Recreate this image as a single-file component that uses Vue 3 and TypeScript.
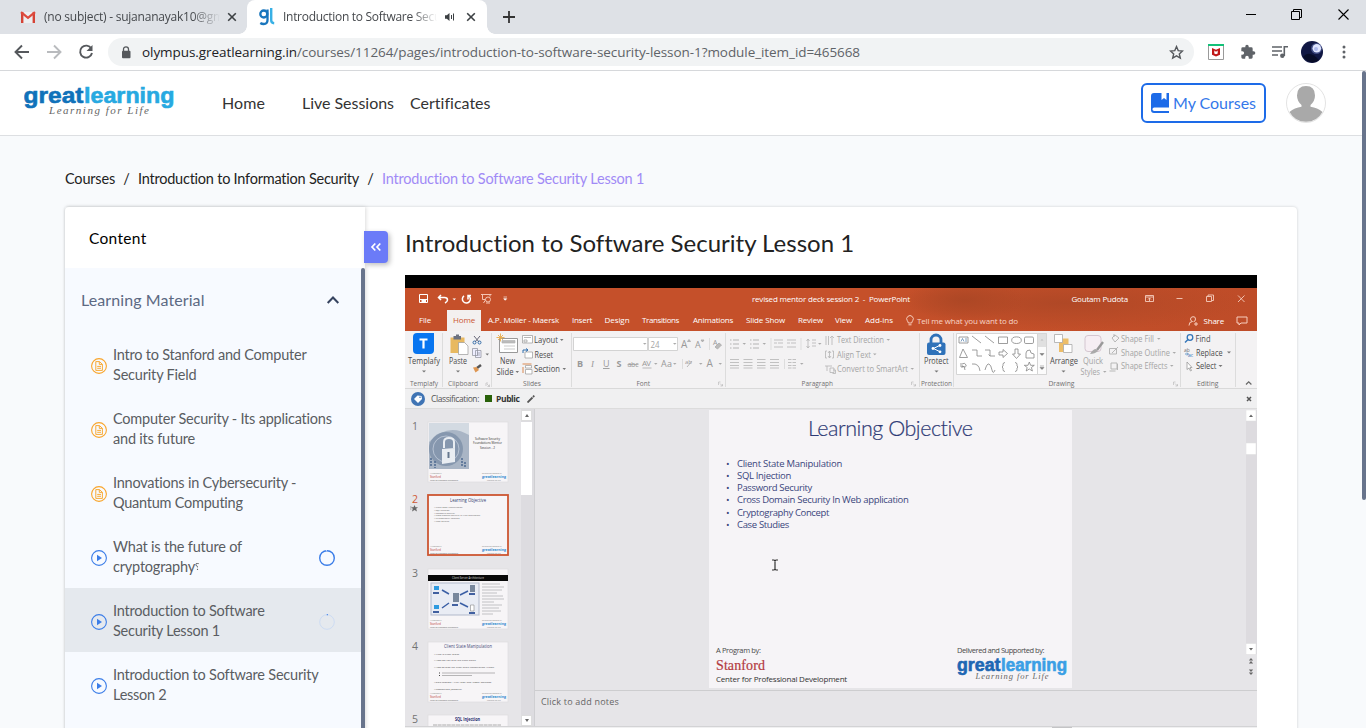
<script setup lang="ts">
interface Label { t: string; x: number; y: number; w: number; c?: string; s?: number }
interface Lesson { lines: { t: string; w: number }[]; kind: 'doc' | 'video'; ring?: 'full' | 'empty'; active?: boolean; mark?: boolean }

// Spreads letters so a label takes up the given width.
const vFit = {
  mounted(el: HTMLElement, binding: { value: number }) {
    const count = (el.textContent ?? '').length
    const natural = el.getBoundingClientRect().width
    if (count) el.style.letterSpacing = `${(binding.value - natural) / count}px`
  },
}

const lessons: Lesson[] = [
  { kind: 'doc', lines: [{ t: 'Intro to Stanford and Computer', w: 193.5 }, { t: 'Security Field', w: 83.5 }] },
  { kind: 'doc', lines: [{ t: 'Computer Security - Its applications', w: 219 }, { t: 'and its future', w: 82 }] },
  { kind: 'doc', lines: [{ t: 'Innovations in Cybersecurity -', w: 183.5 }, { t: 'Quantum Computing', w: 130 }] },
  { kind: 'video', ring: 'full', mark: true, lines: [{ t: 'What is the future of', w: 129 }, { t: 'cryptography', w: 82 }] },
  { kind: 'video', ring: 'empty', active: true, lines: [{ t: 'Introduction to Software', w: 151.5 }, { t: 'Security Lesson 1', w: 107 }] },
  { kind: 'video', lines: [{ t: 'Introduction to Software Security', w: 205.5 }, { t: 'Lesson 2', w: 53.5 }] },
]

const ribbonTabs = [
  { t: 'File', cell: 42, pad: 14, w: 12 },
  { t: 'Home', cell: 34, pad: 6, w: 22, on: true },
  { t: 'A.P. Moller - Maersk', cell: 84, pad: 7, w: 71 },
  { t: 'Insert', cell: 33, pad: 7, w: 20 },
  { t: 'Design', cell: 38, pad: 6.5, w: 25 },
  { t: 'Transitions', cell: 51, pad: 6, w: 37 },
  { t: 'Animations', cell: 53, pad: 6, w: 40 },
  { t: 'Slide Show', cell: 52, pad: 6, w: 39 },
  { t: 'Review', cell: 38, pad: 6, w: 25 },
  { t: 'View', cell: 29, pad: 5, w: 17 },
  { t: 'Add-ins', cell: 42, pad: 6, w: 28 },
]

const g: Record<string, Label[]> = {
  templafy: [
    { t: 'Templafy', x: 408, y: 364, w: 32, c: 'on', s: 8.5 },
    { t: 'Templafy', x: 410, y: 386, w: 28, s: 7.6 },
  ],
  clipboard: [
    { t: 'Paste', x: 449, y: 364, w: 18, c: 'on', s: 8.5 },
    { t: 'Clipboard', x: 448, y: 386, w: 30, s: 7.6 },
  ],
  slides: [
    { t: 'New', x: 500, y: 364, w: 15, c: 'on', s: 8.5 },
    { t: 'Slide', x: 496.5, y: 374.5, w: 17, c: 'on', s: 8.5 },
    { t: 'Layout', x: 534, y: 343, w: 24, c: 'on', s: 8.5 },
    { t: 'Reset', x: 534.5, y: 357.5, w: 18.5, c: 'on', s: 8.5 },
    { t: 'Section', x: 534, y: 372, w: 26, c: 'on', s: 8.5 },
    { t: 'Slides', x: 523, y: 386, w: 18, s: 7.6 },
  ],
  font: [
    { t: '24', x: 650.5, y: 347.5, w: 9, c: 'off', s: 8.5 },
    { t: 'Font', x: 636.5, y: 386, w: 13.5, s: 7.6 },
  ],
  para: [
    { t: 'Text Direction', x: 837, y: 343, w: 47, c: 'off', s: 8.5 },
    { t: 'Align Text', x: 837, y: 357.5, w: 34, c: 'off', s: 8.5 },
    { t: 'Convert to SmartArt', x: 837, y: 372, w: 71, c: 'off', s: 8.5 },
    { t: 'Paragraph', x: 801.5, y: 386, w: 31.5, s: 7.6 },
  ],
  protect: [
    { t: 'Protect', x: 924, y: 364, w: 24.5, c: 'on', s: 8.5 },
    { t: 'Protection', x: 921, y: 386, w: 31, s: 7.6 },
  ],
  drawing: [
    { t: 'Arrange', x: 1050, y: 364, w: 28, c: 'on', s: 8.5 },
    { t: 'Quick', x: 1083, y: 364, w: 20, c: 'off', s: 8.5 },
    { t: 'Styles', x: 1080.5, y: 374.5, w: 19.5, c: 'off', s: 8.5 },
    { t: 'Shape Fill', x: 1121, y: 341.5, w: 33, c: 'off', s: 8.5 },
    { t: 'Shape Outline', x: 1121, y: 355.5, w: 49, c: 'off', s: 8.5 },
    { t: 'Shape Effects', x: 1121, y: 369, w: 46.5, c: 'off', s: 8.5 },
    { t: 'Drawing', x: 1048.5, y: 386, w: 26, s: 7.6 },
  ],
  editing: [
    { t: 'Find', x: 1195.5, y: 341.5, w: 15, c: 'on', s: 8.5 },
    { t: 'Replace', x: 1196, y: 355.5, w: 26.5, c: 'on', s: 8.5 },
    { t: 'Select', x: 1196, y: 369, w: 20.5, c: 'on', s: 8.5 },
    { t: 'Editing', x: 1197, y: 386, w: 21.5, s: 7.6 },
  ],
}

const bullets = [
  { t: 'Client State Manipulation', w: 105 },
  { t: 'SQL Injection', w: 54 },
  { t: 'Password Security', w: 75 },
  { t: 'Cross Domain Security In Web application', w: 171.5 },
  { t: 'Cryptography Concept', w: 92 },
  { t: 'Case Studies', w: 52 },
]

const miniBullets = ['Client State Manipulation', 'SQL Injection', 'Password Security', 'Cross Domain Security In Web application', 'Cryptography Concept', 'Case Studies']
const miniNotes = ['What is Client State?', 'How can you alter the Client state?', 'How do Stop the Client State Manipulation Attack?']
const thumbs = [1, 2, 3, 4, 5]
</script>

<template>
  <div class="window">
    <div class="tabstrip">
      <div class="tab idle">
        <svg class="fav" width="16" height="16" viewBox="0 0 16 16"><path d="M1 3h14v11H1z" fill="#eceff1" /><path d="M1 3h2.4v11H1zM12.6 3H15v11h-2.400z" fill="#d54336" /><path d="M1 3.200l7 5.600 7-5.600" fill="none" stroke="#dd4b3e" stroke-width="2.300" /></svg>
        <span class="tabtext t1"><span v-fit="180">(no subject) - sujananayak10@gm</span></span>
        <svg class="x" width="10" height="10" viewBox="0 0 10 10"><path d="M1.200 1.200l7.600 7.600M8.800 1.200l-7.600 7.600" /></svg>
      </div>
      <div class="tab active">
        <svg class="fav" width="16" height="18" viewBox="0 0 16 18"><circle cx="4.800" cy="6" r="3.500" fill="none" stroke="#1976bd" stroke-width="2.300" /><path d="M8.500 1.500v10.500q0 4-3.800 4-2 0-3.400-1" fill="none" stroke="#1976bd" stroke-width="2.300" /><path d="M11 1.200h1.200v11q0 2.800 3 3" fill="none" stroke="#38b0e5" stroke-width="2.400" /></svg>
        <span class="tabtext t2"><span v-fit="158">Introduction to Software Secu</span></span>
        <svg class="sound" width="12" height="12" viewBox="0 0 12 12"><path d="M1 4.300h1.800L5.500 2v8L2.800 7.700H1z" fill="#3c4043" /><path d="M7.500 4v4M9.500 2.500v7" stroke="#3c4043" /></svg>
        <svg class="x" width="10" height="10" viewBox="0 0 10 10"><path d="M1.200 1.200l7.600 7.600M8.800 1.200l-7.600 7.600" /></svg>
      </div>
      <svg class="plus" width="12" height="12" viewBox="0 0 12 12"><path d="M6 0v12M0 6h12" stroke="#333" stroke-width="1.800" /></svg>
      <div class="winctl">
        <svg width="10" height="11" viewBox="0 0 10 11"><path d="M0 5.500h10" stroke="#000" /></svg>
        <svg width="11" height="11" viewBox="0 0 11 11"><path d="M.5 2.500h8v8h-8zM2.500 2.500v-2h8v8h-2" fill="none" stroke="#000" /></svg>
        <svg width="11" height="11" viewBox="0 0 11 11"><path d="M.5.5l10 10M10.500.5l-10 10" stroke="#000" stroke-width="1.100" /></svg>
      </div>
    </div>

    <div class="toolbar">
      <svg class="back" width="16" height="16" viewBox="0 0 16 16"><path d="M15 8H2M8 1.500L1.500 8 8 14.500" /></svg>
      <svg class="fwd" width="16" height="16" viewBox="0 0 16 16"><path d="M1 8h13M8 1.500L14.500 8 8 14.500" /></svg>
      <svg class="reload" width="16" height="16" viewBox="0 0 16 16"><path d="M13.300 4.500A6 6 0 1 0 14 9" /><path d="M14.500 1v6h-6z" fill="#55585c" stroke="none" /></svg>
      <div class="omnibox">
        <svg width="10" height="13" viewBox="0 0 10 13"><path d="M2.500 5V3.300a2.500 2.500 0 0 1 5 0V5" fill="none" stroke="#55585c" stroke-width="1.300" /><rect x="1" y="4.800" width="8.500" height="7.400" rx="1" fill="#55585c" /></svg>
        <div class="url" v-fit="718"><b>olympus.greatlearning.in</b>/courses/11264/pages/introduction-to-software-security-lesson-1?module_item_id=465668</div>
        <svg class="star" width="15" height="15" viewBox="0 0 15 15"><path d="M7.500 1.600l1.700 4 4.300.4-3.200 2.900 1 4.200-3.800-2.300-3.800 2.300 1-4.200L1.500 6l4.300-.4z" fill="none" stroke="#55585c" stroke-width="1.400" /></svg>
      </div>
      <div class="exts">
        <svg width="16" height="16" viewBox="0 0 16 16"><path d="M.5.5h15v15H.5z" fill="#fff" stroke="#9a9a9a" /><path d="M0 0h16v2H0z" fill="#12c178" /><path d="M4 4l4 1.800L12 4v6.700L8 12.500l-4-1.800z" fill="#c01818" /><path d="M6.300 6.500v3l1.700.8 1.700-.8v-3L8 7.800z" fill="#fff" /></svg>
        <svg width="16" height="16" viewBox="0 0 24 24"><path d="M20.500 11H19V7a2 2 0 0 0-2-2h-4V3.500a2.500 2.500 0 0 0-5 0V5H4a2 2 0 0 0-2 2v3.800h1.500a2.700 2.700 0 0 1 0 5.400H2V20a2 2 0 0 0 2 2h3.800v-1.500a2.700 2.700 0 0 1 5.400 0V22H17a2 2 0 0 0 2-2v-4h1.500a2.500 2.500 0 0 0 0-5z" fill="#5f6368" /></svg>
        <svg width="16" height="14" viewBox="0 0 16 14"><path d="M0 2h10M0 6h10M0 10h6" stroke="#5f6368" stroke-width="1.600" /><circle cx="10.300" cy="10.800" r="2.200" fill="#5f6368" /><path d="M12.300 11V1.800H16" fill="none" stroke="#5f6368" stroke-width="1.600" /></svg>
        <svg width="22" height="22" viewBox="0 0 22 22"><circle cx="11" cy="11" r="11" fill="#101743" /><path d="M2 16Q8 8 18 19Q10 25 2 16" fill="#070c27" /><circle cx="15.500" cy="7.500" r="5.500" fill="#6170b0" opacity=".6" /><circle cx="15.800" cy="7.300" r="4.300" fill="#dfe5ff" /><circle cx="15" cy="8" r="2" fill="#aeb9ec" /></svg>
        <svg width="4" height="14" viewBox="0 0 4 14"><circle v-for="y in [2, 7, 12]" :key="y" cx="2" :cy="y" r="1.500" fill="#5f6368" /></svg>
      </div>
    </div>

    <div class="page">
      <header class="site">
        <svg class="logo" width="152" height="40" viewBox="24 80 152 40">
          <g class="brand"><text x="23.500" y="103" textLength="60" lengthAdjust="spacingAndGlyphs" fill="#1072ba">great</text><text x="84" y="103" textLength="90.500" lengthAdjust="spacingAndGlyphs" fill="#27a9e1">learning</text></g>
          <text x="49" y="114" textLength="100" class="tag">Learning for Life</text>
        </svg>
        <nav>
          <a class="n1"><span v-fit="43">Home</span></a>
          <a class="n2"><span v-fit="92">Live Sessions</span></a>
          <a><span v-fit="80.500">Certificates</span></a>
        </nav>
        <button class="mycourses">
          <svg width="18" height="20" viewBox="0 0 18 20"><path d="M3 0h7.500v7l2.500-2 2.500 2V0H18v14.500H3.200a1 1 0 0 0 0 3.500H18v2H3q-3 0-3-3V3q0-3 3-3z" fill="#1d6be8" /></svg>
          <span v-fit="83">My Courses</span>
        </button>
        <svg class="avatar" width="40" height="40" viewBox="0 0 40 40"><circle cx="20" cy="20" r="19.500" fill="#fff" stroke="#e3e3e3" /><path d="M3.500 29q5-4.500 12-5.300V22q-4.500-4-4.500-9.500Q11 3 20 3t9 9.500q0 5.500-4.500 9.500v1.700q7 .8 12 5.300Q31 38.800 20 38.800T3.500 29z" fill="#a9a9a9" /></svg>
      </header>

      <div class="crumbs">
        <span v-fit="50">Courses</span><i>/</i><span v-fit="221.500">Introduction to Information Security</span><i>/</i><span class="here" v-fit="262">Introduction to Software Security Lesson 1</span>
      </div>

      <div class="card">
        <aside>
          <div class="ctitle"><span v-fit="57.500">Content</span></div>
          <div class="scroller">
            <div class="list">
              <div class="section">
                <span v-fit="123.500">Learning Material</span>
                <svg width="14" height="10" viewBox="0 0 14 10"><path d="M1.700 8L7 2.500 12.300 8" fill="none" stroke="#36435f" stroke-width="2" /></svg>
              </div>
              <div v-for="(l, i) in lessons" :key="i" class="lesson" :class="{ current: l.active }">
                <svg v-if="l.kind === 'doc'" width="16" height="16" viewBox="0 0 16 16"><g fill="none" stroke="#f9a52c"><circle cx="8" cy="8" r="7.400" stroke-width="1.100" /><path d="M4.800 3.600h3.700l2.900 2.700v6.100H4.800zM8.300 3.700v2.700h3M6.200 8.400h3.800M6.200 10.300h3.800" stroke-width=".95" /></g></svg>
                <svg v-else width="16" height="16" viewBox="0 0 16 16"><circle cx="8" cy="8" r="7.400" fill="none" stroke="#3b7de8" stroke-width="1.100" /><path d="M6 4.800v6.400L11 8z" fill="#3b7de8" /></svg>
                <div class="ltext">
                  <div v-for="(line, j) in l.lines" :key="j"><span v-fit="line.w">{{ line.t }}</span><span v-if="l.mark && j === 1" class="qm">?</span></div>
                </div>
                <svg v-if="l.ring" width="16" height="16" viewBox="0 0 16 16"><circle cx="8" cy="8" r="7.300" fill="none" :stroke="l.ring === 'full' ? '#3b7de8' : '#cddcf3'" :stroke-width="l.ring === 'full' ? 1.4 : 1" /><path v-if="l.ring === 'full'" d="M7.500 0v1.300" stroke="#dbe7fb" stroke-width=".8" /><path v-else d="M8.300 0v1.300" stroke="#3b7de8" /></svg>
              </div>
            </div>
            <div class="sbar"></div>
          </div>
          <div class="collapse"><svg width="12" height="10" viewBox="0 0 12 10"><path d="M5.300 1.500L2 5l3.300 3.500M10.300 1.500L7 5l3.300 3.500" fill="none" stroke="#fff" stroke-width="1.700" /></svg></div>
        </aside>

        <main>
          <h1><span v-fit="449">Introduction to Software Security Lesson 1</span></h1>
          <div class="video">
            <div class="letterbox"></div>
            <div class="ppthead">
              <div class="ptitle">
                <svg width="110" height="21" viewBox="405 288 110 21" fill="none" stroke="#fff">
                  <path d="M419.500 294.500h8v8h-8zM419.500 299.500h8" /><path d="M421.500 300h4.500v2.500h-4.500z" fill="#fff" stroke="none" /><path d="M441 295l-2.500 2.500 2.500 2.500M439 297.500h5.500q3 0 3 2.500 0 1.500-2.500 3" stroke-width="1.500" /><path d="M452.500 298.500h3.500l-1.700 1.800z" fill="#fff" stroke="none" /><path d="M464 295.800a4 4 0 1 0 5 .2M468 299.500v-4h3" stroke-width="1.500" /><path d="M481 294.500h10.500M482.500 295v4.500h3M490 295v1.500M483.500 303l2-3" stroke="#f4c4b2" /><circle cx="488" cy="299.500" r="2.500" stroke="#f4c4b2" /><path d="M487 302v2M489 302v2" stroke="#f4c4b2" /><path d="M503.500 297h3.500M503.700 298.700h3l-1.500 1.600z" stroke-width=".6" fill="#fff" />
                </svg>
                <span class="doc" v-fit="158">revised mentor deck session 2 &nbsp;- &nbsp;PowerPoint</span>
                <span class="owner" v-fit="56.500">Goutam Pudota</span>
                <svg width="120" height="21" viewBox="1137 288 120 21" fill="none" stroke="#f5cdbd"><path d="M1145.500 295.500h8v6h-8zM1145.500 297h8M1149.500 301v-3M1148 299.500l1.500-1.500 1.500 1.500M1176.500 298.500h6M1206.500 296.500h5v5h-5zM1208 296.500v-1.500h5.500v5.500h-1.500M1238 295.500l6.500 6.500M1244.500 295.500l-6.500 6.500" stroke-width=".9" /></svg>
              </div>
              <div class="ptabs">
                <div v-for="t in ribbonTabs" :key="t.t" :class="{ on: t.on }" :style="{ width: t.cell + 'px', paddingLeft: t.pad + 'px' }"><span v-fit="t.w">{{ t.t }}</span></div>
                <svg class="bulb" width="10" height="12" viewBox="0 0 10 12"><path d="M3.300 8q0-1-1-2.200a3.300 3.300 0 1 1 5.400 0Q6.700 7 6.700 8zM3.500 9.800h3" fill="none" stroke="#f7cdbd" /></svg>
                <span class="tell" v-fit="101">Tell me what you want to do</span>
                <svg class="person" width="10" height="10" viewBox="0 0 10 10"><path d="M1 9.500q0-4 3.500-4Q2.500 5 2.500 3T5 .7 7.500 3 5.500 5.700M6 8h4M8 6v4" fill="none" stroke="#f7cdbd" /></svg>
                <span class="share" v-fit="20.500">Share</span>
                <svg width="12" height="10" viewBox="0 0 12 10"><path d="M1 1h10v6H5L3 9V7H1z" fill="none" stroke="#f7cdbd" /></svg>
              </div>
            </div>

            <div class="ribbon">
              <svg width="38" height="57" viewBox="405 332 38 57">
                <path d="M417 333h17v17q0 4-4 4h-13q-4 0-4-4v-13q0-4 4-4z" fill="#0875f0" /><path d="M419.500 339.500h8M423.500 339.500v9" stroke="#fff" stroke-width="2.200" /><path d="M422 370.500h4l-2 2z" class="arr" />
                <text v-for="l in g.templafy" :key="l.t + l.y" :x="l.x" :y="l.y" :textLength="l.w" lengthAdjust="spacingAndGlyphs" :font-size="l.s" :class="l.c">{{ l.t }}</text>
                <path d="M442.500 333v54" class="sep" />
              </svg>
              <svg width="49" height="57" viewBox="443 332 49 57">
                <path d="M450.500 337.500h14v15.500h-14z" fill="#e8b961" /><path d="M453.500 336h7.500v3.500h-7.500zM456 334.500h3v2h-3z" fill="#6c7280" /><path d="M458.500 342.500h6l3.500 3.500v8.500h-9.500z" fill="#fff" stroke="#999" stroke-width=".7" />
                <path d="M474 336l5 6M480 336l-5 6" stroke="#667" /><circle cx="474.500" cy="342.500" r="1.500" fill="none" stroke="#356ca8" /><circle cx="479.500" cy="342.500" r="1.500" fill="none" stroke="#356ca8" />
                <path d="M472.500 348.500h5v7h-5zM475.500 350.500h5.500v7h-5.500zM477 353h3M477 355h3" fill="#eef" stroke="#8b8e99" stroke-width=".7" /><path d="M485.500 353.500h3.500l-1.700 2zM456 370.500h4l-2 2z" class="arr" />
                <path d="M481 365l-4 3" stroke="#555" stroke-width="2.400" /><path d="M473 367.500l3.500-.5 2.500 3-3.500 2.500z" fill="#de9651" />
                <text v-for="l in g.clipboard" :key="l.t" :x="l.x" :y="l.y" :textLength="l.w" lengthAdjust="spacingAndGlyphs" :font-size="l.s" :class="l.c">{{ l.t }}</text>
                <path d="M486 386v-3h2M487 384l2.500 2.500M489.500 384.500v2h-2" class="launch" /><path d="M491.500 333v54" class="sep" />
              </svg>
              <svg width="80" height="57" viewBox="492 332 80 57">
                <path d="M499.500 338.500h18v14h-18z" fill="#fff" stroke="#999" /><path d="M502 340.500h13v2.500h-13zM504 346h11M504 349h11" fill="#bbb" stroke="#b5b5b5" stroke-width=".7" /><path d="M500.500 333.500v8M496.500 337.500h8M498 335l5 5M503 335l-5 5" stroke="#e8ad4c" stroke-width=".9" />
                <g fill="#fff" stroke="#999" stroke-width=".7"><path d="M522.500 335.500h10v7.500h-10zM524 337.500h7M524 340h3v2h-3z" /><path d="M525 352h7.500v6h-7.500z" /><path d="M525.500 365.500h6v2.500h-6zM525.500 369.500h6.500v4.500h-6.500z" /></g><path d="M523 353v-3h5M526 348.500l2 1.500-2 1.500" fill="none" stroke="#306eac" /><path d="M522.500 364h9M523 367v6" stroke="#db8a52" />
                <text v-for="l in g.slides" :key="l.t" :x="l.x" :y="l.y" :textLength="l.w" lengthAdjust="spacingAndGlyphs" :font-size="l.s" :class="l.c">{{ l.t }}</text>
                <path d="M560 339h3.500l-1.700 2zM562.500 368h3.500l-1.700 2zM515.500 371h3.500l-1.700 2z" class="arr" /><path d="M571.500 333v54" class="sep" />
              </svg>
              <svg width="154" height="57" viewBox="572 332 154 57">
                <path d="M573.500 337.500h74v13h-74zM648.500 337.500h29v13h-29z" fill="#fff" stroke="#d3d3d3" /><path d="M643 343h3.500l-1.700 1.700zM673 343h3.500l-1.700 1.700zM654 363h3.500l-1.700 1.700zM673 363h3.500l-1.700 1.700zM699 363h3.500l-1.700 1.700zM718.500 363h3.500l-1.700 1.700z" fill="#aaa" />
                <g class="glyphs"><text x="577" y="367" font-weight="bold">B</text><text x="591" y="367" font-style="italic" font-family="Liberation Serif">I</text><text x="603" y="367" text-decoration="underline">U</text><text x="616.500" y="367" font-weight="bold">S</text><text x="627.500" y="367" textLength="11" class="g7" text-decoration="line-through">abc</text><text x="642" y="366" textLength="9" class="g8">AV</text><text x="661" y="367" textLength="11">Aa</text><text x="681" y="348" class="g10">A</text><text x="695" y="348">A</text><text x="685" y="364" class="g6">ab</text><text x="706.500" y="366.500" class="g10">A</text><text x="713" y="345" class="g7">A</text></g>
                <path d="M687.500 341.500l1.500-2 1.500 2zM701 340h3l-1.500 2zM715 347l4-4 2.500 2-4 4zM642.500 368h9M687 367l5-6" fill="#bbb" stroke="#aaa" stroke-width=".8" /><path d="M709.500 338v12M682.500 359v10" stroke="#ddd" />
                <text v-for="l in g.font" :key="l.t" :x="l.x" :y="l.y" :textLength="l.w" lengthAdjust="spacingAndGlyphs" :font-size="l.s" :class="l.c">{{ l.t }}</text>
                <path d="M718.500 385v-3h2M720 383.500l2.500 2.500M722.500 384v2h-2" class="launch" /><path d="M725.500 333v54" class="sep" />
              </svg>
              <svg width="194" height="57" viewBox="726 332 194 57">
                <g fill="none" stroke="#b4b4b4"><path v-for="y in [340, 344, 348]" :key="y" :d="`M730 ${y}h1.500M733 ${y}h6M750 ${y}h1.500M753 ${y}h6`" /><path v-for="y in [359.5, 362.5, 365.5, 368]" :key="y" stroke-width=".8" :d="`M730 ${y}h9M743.500 ${y}h9M757 ${y}h8.500M770 ${y}h9M788 ${y}h3.500M792.500 ${y}h3.500`" /><path stroke-width=".8" d="M774 340h9M778 343h5M774 347h9M787 340h9M791 343h5M787 347h9M774 343h3M787 343h3M808 339v9M806.500 341l1.500-2 1.500 2M806.500 346l1.500 2 1.500-2M812 340h4M812 343h4M812 346h4M826 336v9M828.500 336v9M832 345v-8M830 338l2-2 2 2M827 351h-1.500v7h1.500M832 351h1.500v7h-1.500M829.500 351v7M828 353l1.500-2 1.500 2M828 356l1.500 2 1.500-2M825 366h7M827 366v5M830 368h4v4.500h-4zM833 370h2.500v3.500h-3" /><path d="M771 338v12M801 338v12M784.500 359v10" stroke="#ddd" /></g>
                <path d="M742.500 343h3.500l-1.700 1.700zM762.500 343h3.500l-1.700 1.700zM818 343h3.500l-1.700 1.700zM800 363h3.500l-1.700 1.700zM886.500 339h3.500l-1.700 1.700zM873 353.500h3.500l-1.700 1.700zM910.500 368h3.500l-1.700 1.700z" fill="#aaa" />
                <text v-for="l in g.para" :key="l.t" :x="l.x" :y="l.y" :textLength="l.w" lengthAdjust="spacingAndGlyphs" :font-size="l.s" :class="l.c">{{ l.t }}</text>
                <path d="M911.500 385v-3h2M913 383.500l2.500 2.500M915.500 384v2h-2" class="launch" /><path d="M919.500 333v54" class="sep" />
              </svg>
              <svg width="34" height="57" viewBox="920 332 34 57">
                <path d="M931 344v-4a5 5 0 0 1 10 0v4" fill="none" stroke="#2f72b9" stroke-width="2.800" /><rect x="927" y="342.500" width="18.500" height="12.500" rx="2" fill="#2f72b9" /><path d="M939.500 345.500l-6 3 6 3" fill="none" stroke="#fff" /><circle cx="933" cy="348.500" r="1.400" fill="#fff" /><circle cx="940" cy="345.500" r="1.400" fill="#fff" /><circle cx="940" cy="351.800" r="1.400" fill="#fff" /><path d="M934.500 370.500h4l-2 2z" class="arr" />
                <text v-for="l in g.protect" :key="l.t" :x="l.x" :y="l.y" :textLength="l.w" lengthAdjust="spacingAndGlyphs" :font-size="l.s" :class="l.c">{{ l.t }}</text><path d="M953.500 333v54" class="sep" />
              </svg>
              <svg width="227" height="57" viewBox="954 332 227 57">
                <path d="M956.500 333.500h90v41h-90z" fill="#fff" stroke="#d5d5d5" /><path d="M1037.500 333.500h9v41h-9z" fill="#fbfbfb" stroke="#d5d5d5" /><path d="M1038 334h8v13h-8z" fill="#e0e0e0" /><path d="M1040.500 340.500h3l-1.500-1.500z" fill="#bbb" /><path d="M1040 353.500h4l-2 2zM1040 367.500h4l-2 2zM1040 366h4" fill="#777" stroke="#777" stroke-width=".5" />
                <g fill="none" stroke="#858585" stroke-width=".8"><path d="M959 337h9v6h-9z" /><path d="M961 341.500l1.500-3 1.500 3M965 339h2M965 341h2" stroke="#4a78a8" stroke-width=".7" /><path d="M972 336l9 7M985 336l9 7M998.500 337h9v6.500h-9z" /><rect x="1024.500" y="337" width="9" height="6.500" rx="1.300" /><ellipse cx="1016.500" cy="340.200" rx="4.800" ry="3.300" /><path d="M963 349l-3.500 8.500h8zM972 350h5v6h5M985 350h5v6h5M988.500 354.500l1.500 1.500M999 352h4v-2.500l4.500 4-4.500 4V355h-4zM1015 349v5h-2.500l4 4.500 4-4.500h-2.500v-5zM1034 354v4h-8v-5q0-3 4-3 0 4 4 4z" /><path d="M962 364q3-2 4 1t-4 1q3 0 3 4M961 363v4h2M972 364q7-1 8 7M985 370q2-7 4-6t3 6 3 0M1005 362.500q-2 0-2 2v1.500l-1 1 1 1v1.500q0 2 2 2M1015 362.500q2 0 2 2v1.500l1 1-1 1v1.500q0 2-2 2M1029.300 362l1.300 3.300h3.700l-2.900 2.200 1 3.500-3.100-2-3.100 2 1-3.500-2.900-2.200h3.700z" /></g>
                <g stroke="#a9a9a9" stroke-width=".8"><path d="M1059 338.500h9.500v9h-9.500zM1059 346h5v6h-5z" fill="#edbd67" stroke="none" /><path d="M1054.500 334.500h8v8h-8zM1063.500 344.500h8.500v8h-8.500z" fill="#fff" /><rect x="1085" y="335.500" width="16" height="16" rx="3" fill="#f6eef3" stroke="#cbbbc6" /></g><path d="M1103 342l-6 8" stroke="#999" stroke-width="2.300" /><path d="M1096 349q-3 0-6 5 5 0 8-3z" fill="#aaa" />
                <g fill="none" stroke="#b1b1b1" stroke-width=".9"><path d="M1112 338l3-3 4 3-4 4zM1114 337v-3M1109.500 348.500h7v5.500h-7zM1112 353l6-6M1111 363h6v6h-6zM1109.500 371h6M1117.500 364v6" /></g>
                <text v-for="l in g.drawing" :key="l.t" :x="l.x" :y="l.y" :textLength="l.w" lengthAdjust="spacingAndGlyphs" :font-size="l.s" :class="l.c">{{ l.t }}</text>
                <path d="M1061.500 370.500h4l-2 2z" class="arr" /><path d="M1103 371h3.500l-1.700 1.700zM1157 338h3.500l-1.700 1.700zM1172.500 352h3.500l-1.700 1.700zM1170 365h3.500l-1.700 1.700z" fill="#aaa" /><path d="M1173.500 385v-3h2M1175 383.500l2.500 2.500M1177.500 384v2h-2" class="launch" /><path d="M1180.500 333v54" class="sep" />
              </svg>
              <svg width="76" height="57" viewBox="1181 332 76 57">
                <circle cx="1190" cy="337.500" r="2.800" fill="none" stroke="#3275b8" stroke-width="1.300" /><path d="M1188 339.500l-3 3" stroke="#3275b8" stroke-width="1.500" /><g font-size="5"><text x="1184" y="352">ab</text><text x="1188" y="356.500" class="blue">ac</text></g><path d="M1185 354h3M1187 352.500l1.500 1.500-1.500 1.500" fill="none" stroke="#3275b8" stroke-width=".7" /><path d="M1187 362v7.500l2-1.500 1.500 3 1-.5-1.500-3h2z" fill="#fff" stroke="#999" stroke-width=".8" />
                <text v-for="l in g.editing" :key="l.t" :x="l.x" :y="l.y" :textLength="l.w" lengthAdjust="spacingAndGlyphs" :font-size="l.s" :class="l.c">{{ l.t }}</text>
                <path d="M1227 351.500h4l-2 2zM1218.500 365h4l-2 2z" class="arr" /><path d="M1235.500 333v54" class="sep" /><path d="M1246 384.500l2.700-2.700 2.700 2.700" fill="none" stroke="#666" stroke-width="1.200" />
              </svg>
            </div>

            <div class="classbar">
              <svg width="14" height="14" viewBox="0 0 14 14"><circle cx="7" cy="7" r="7" fill="#3f74b4" /><path d="M3 7l3.500-3.500 4 .5.500 3-4 4z" fill="#fff" /><circle cx="9" cy="5.300" r=".8" fill="#3f74b4" /></svg>
              <span v-fit="48">Classification:</span><i></i><b v-fit="23.500">Public</b>
              <svg width="8" height="8" viewBox="0 0 8 8"><path d="M.5 7.500L5.500 2.500M6 2l1.300-1.300" stroke="#555" stroke-width="1.800" /></svg>
              <svg class="cx" width="6" height="6" viewBox="0 0 6 6"><path d="M1 1l4 4M5 1L1 5" stroke="#555" stroke-width="1.500" /></svg>
            </div>

            <div class="work">
              <div class="thumbs">
                <div v-for="n in thumbs" :key="n" class="trow" :class="{ sel: n === 2 }">
                  <div class="num">{{ n }}<svg v-if="n === 2" width="8" height="7" viewBox="0 0 8 7"><path d="M4.500 0l1 2.200H8L6.200 3.800l.8 2.700-2.500-1.500L2 6.500l.8-2.700L1 2.200h2.500z" fill="#666" /><path d="M0 2h1.500M0 4h1.500" stroke="#777" stroke-width=".6" /></svg></div>
                  <svg class="mini" width="82" height="62" viewBox="-1 -1 82 62">
                    <rect x="0" y="0" width="80" height="60" fill="#f7f5f7" :stroke="n === 2 ? '#cc5631' : '#dcdcde'" :stroke-width="n === 2 ? 1.8 : 0.7" />
                    <g v-if="n === 1">
                      <path d="M1 1h40v46H1z" fill="#a9b5c5" /><path d="M1 1h40v12Q20 0 1 20z" fill="#d3dae2" /><circle cx="18" cy="27" r="17" fill="#7d90a8" opacity=".8" /><circle cx="18" cy="27" r="13" fill="none" stroke="#c1ccda" stroke-width=".8" /><path d="M3 36v9M7 39v7M34 36v9M37 40v6" stroke="#4d6a90" stroke-width="1.500" stroke-dasharray="2 1" /><path d="M16 26v-6q0-4 5-4t5 4v6" fill="none" stroke="#e9edf2" stroke-width="2" /><path d="M14 27l13-1v14l-13 2z" fill="#e9edf2" /><path d="M20.500 30v6" stroke="#66788f" stroke-width="2" />
                      <g fill="#333" font-size="3.800"><text x="47" y="17.500" textLength="25" lengthAdjust="spacingAndGlyphs">Software Security</text><text x="45" y="22" textLength="29" lengthAdjust="spacingAndGlyphs">Foundations Mentor</text><text x="52" y="26.500" textLength="15" lengthAdjust="spacingAndGlyphs">Session - 2</text></g>
                    </g>
                    <g v-else-if="n === 2"><text x="22" y="6.500" font-size="5" textLength="36" lengthAdjust="spacingAndGlyphs" fill="#34406f">Learning Objective</text><text v-for="(b, i) in miniBullets" :key="b" x="6" :y="13 + i * 2.8" font-size="2.300" fill="#666">• {{ b }}</text></g>
                    <g v-else-if="n === 3">
                      <path d="M0 6h80v6H0z" fill="#080808" /><text x="24" y="10.300" font-size="3.300" textLength="32" lengthAdjust="spacingAndGlyphs" fill="#ddd">Client Server Architecture</text><rect x="3" y="14" width="48" height="32" fill="#e9ecf4" stroke="#b1b9cb" />
                      <path d="M14 21l7 4M32 26l8-4M14 39l7-5M32 34l8 4" stroke="#3b5fa5" stroke-width="1.500" /><path d="M6 17h5v4H6zM6 36h5v4H6z" fill="#2f9be0" /><path d="M5 23h6v2H5zM5 42h6v2H5zM41 24h6v2h-6zM41 43h6v2h-6zM24 35h6v2h-6z" fill="#4160a0" /><path d="M42 16h5v7h-5zM25 24h6v9h-6z" fill="#78879c" /><path d="M42.500 36h3.500v6h-3.500z" fill="#fff" stroke="#888" stroke-width=".6" />
                      <path v-for="i in 11" :key="i" :d="`M54 ${12 + i * 3}h${[18, 22, 20, 15, 21, 22, 12, 20, 17, 19, 11][i - 1]}`" stroke="#b4b4b8" stroke-width=".8" />
                    </g>
                    <g v-else-if="n === 4"><text x="16" y="6" font-size="4.900" textLength="48" lengthAdjust="spacingAndGlyphs" fill="#454879">Client State Manipulation</text><text v-for="(b, i) in miniNotes" :key="b" x="6" :y="13 + i * 6.3" font-size="2.500" fill="#444">• {{ b }}</text><path d="M14 31h53M14 33.500h30" stroke="#999" stroke-width=".7" /><path d="M11 31h1M11 33.500h1" stroke="#444" /><text x="6" y="40.500" font-size="2.500" fill="#444">• Data Leakage – Why "GET" and "POST" methods</text><text x="6" y="47.500" font-size="2.500" fill="#444">• Cookies and JavaScript</text></g>
                    <g v-else><text x="27" y="6" font-size="4.500" font-weight="bold" textLength="25" lengthAdjust="spacingAndGlyphs" fill="#252b6d">SQL Injection</text><path d="M5 10h68" stroke="#999" stroke-width=".8" stroke-dasharray="4 .6" /></g>
                    <g v-if="n < 5"><text x="2" y="51.500" font-size="1.800" fill="#777">A Program by:</text><text x="2" y="55.500" font-size="3.400" textLength="11" lengthAdjust="spacingAndGlyphs" fill="#bc4141">Stanford</text><text x="2" y="58.500" font-size="2" textLength="28" lengthAdjust="spacingAndGlyphs" fill="#555">Center for Professional Development</text><text x="54" y="51.500" font-size="1.800" textLength="20" lengthAdjust="spacingAndGlyphs" fill="#777">Delivered and Supported by:</text><text x="54" y="56.300" font-size="4" textLength="24" lengthAdjust="spacingAndGlyphs" font-weight="bold" fill="#328bd0">greatlearning</text><text x="59" y="58.800" font-size="1.800" fill="#777">Learning for Life</text></g>
                  </svg>
                </div>
              </div>
              <div class="tbar"><div class="up"></div><div class="knob"></div><div class="gap"></div><div class="down"></div></div>
              <div class="stage">
                <div class="canvasrow">
                  <div class="slide">
                    <h2><span v-fit="165">Learning Objective</span></h2>
                    <ul><li v-for="b in bullets" :key="b.t"><span v-fit="b.w">{{ b.t }}</span></li></ul>
                    <svg class="ibeam" width="8" height="12" viewBox="0 0 8 12"><path d="M1 1h2l1 .7 1-.7h2M1 11h2l1-.7 1 .7h2M4 1.500v9" fill="none" stroke="#333" stroke-width="1.200" /></svg>
                    <div class="sfoot">
                      <div class="by"><span v-fit="44.500">A Program by:</span><strong v-fit="49">Stanford</strong><em v-fit="131">Center for Professional Development</em></div>
                      <div class="by"><span v-fit="87">Delivered and Supported by:</span>
                        <svg width="111" height="26" viewBox="0 0 111 26"><g class="brand small"><text x="0" y="15.500" textLength="43.500" lengthAdjust="spacingAndGlyphs" fill="#1d67b4">great</text><text x="44" y="15.500" textLength="66" lengthAdjust="spacingAndGlyphs" fill="#3b9fe5">learning</text></g><text x="18.500" y="23.500" textLength="73" class="tag small">Learning for Life</text></svg>
                      </div>
                    </div>
                  </div>
                  <svg class="vbar" width="11" height="280" viewBox="1246 410 11 280"><path d="M1246 410h11v244h-11z" fill="#dddbdf" /><path d="M1246 410h10v11h-10zM1246 443h10v11.500h-10zM1246 643.500h10v11h-10z" fill="#fff" stroke="#ddd" stroke-width=".5" /><path d="M1249 417h4l-2-2.500zM1249 648h4l-2 2.500zM1248.800 660.500h4.400l-2.200-2.500zM1248.800 663.500h4.400l-2.200-2.500zM1248.800 669.500h4.400l-2.200 2.500zM1248.800 672.500h4.400l-2.200 2.500z" fill="#666" /></svg>
                </div>
                <div class="notes"><span v-fit="78">Click to add notes</span></div>
              </div>
            </div>
            <div class="status"><i></i></div>
          </div>
        </main>
      </div>
      <div class="pagebar"></div>
    </div>
  </div>
</template>

<style>
html, body { margin: 0; overflow: hidden; }
</style>

<style scoped>
* { box-sizing: border-box; }
svg { display: block; flex: none; }
span, strong, em, b { white-space: pre; display: inline-block; }
.window { width: 1366px; height: 728px; overflow: hidden; background: #fff; font-family: Lato, "Liberation Sans", sans-serif; }
.tabstrip { height: 34px; background: #dee1e6; display: flex; align-items: center; font: 12px/34px "Open Sans", "Noto Sans", sans-serif; color: #45484c; }
.tab { display: flex; align-items: center; height: 34px; }
.idle { width: 247px; padding-left: 20px; }
.active { position: relative; width: 240px; padding-left: 12px; background: #fff; border-radius: 8px 8px 0 0; }
.active::before, .active::after { content: ""; position: absolute; bottom: 0; width: 8px; height: 8px; }
.active::before { left: -8px; background: radial-gradient(circle at 0 0, transparent 7.5px, #fff 8px); }
.active::after { right: -8px; background: radial-gradient(circle at 100% 0, transparent 7.5px, #fff 8px); }
.fav { margin-right: 8px; }
.tabtext { overflow: hidden; height: 34px; -webkit-mask-image: linear-gradient(90deg, #000 84%, transparent); mask-image: linear-gradient(90deg, #000 84%, transparent); }
.t1 { width: 176px; margin-right: 7px; }
.t2 { width: 154px; margin-right: 7px; }
.sound { margin-right: 10px; }
.x { fill: none; stroke: #3c4043; stroke-width: 1.6; }
.plus { margin-left: 16px; }
.winctl { margin-left: auto; display: flex; gap: 36px; padding: 0 17px 6px 0; }
.winctl svg:first-child { margin-right: -1px; }
.toolbar { height: 37px; border-bottom: 1px solid #d6d8db; display: flex; align-items: center; padding-left: 14px; background: #fff; }
.toolbar > svg { fill: none; stroke: #55585c; stroke-width: 1.9; margin-right: 16px; }
.toolbar > .fwd { stroke: #b9bbbe; }
.toolbar > .reload { margin-right: 14px; }
.omnibox { width: 1086px; height: 28px; border-radius: 14px; background: #f1f3f4; display: flex; align-items: center; padding: 0 10px 0 13px; }
.url { margin-left: 11px; font: 13.5px/28px "Open Sans", "Noto Sans", sans-serif; color: #5f6368; white-space: pre; }
.url b { font-weight: 400; color: #202124; display: inline; }
.star { margin-left: auto; }
.exts { display: flex; align-items: center; gap: 16px; margin-left: 14px; }
.exts svg:nth-child(4) { margin-left: -3px; }
.exts svg:nth-child(5) { margin-left: 3px; }
.page { position: relative; height: 657px; background: #f8fafc; }
.site { height: 65px; background: #fff; border-bottom: 1px solid #dddfe2; display: flex; align-items: center; padding-left: 24px; }
.logo { margin-top: -7px; }
.brand { font: bold 22.5px "Liberation Sans", sans-serif; stroke-width: .6px; }
.brand text:first-child { stroke: #1072ba; }
.brand text:last-child { stroke: #27a9e1; }
.tag { font: italic 11px "Liberation Serif", serif; fill: #666; }
.brand.small { font-size: 17.5px; }
.brand.small text:first-child { stroke: #1d67b4; }
.brand.small text:last-child { stroke: #3b9fe5; }
.tag.small { font-size: 8.500px; }
nav { display: flex; font-size: 16px; color: #333; margin: -2px 0 0 46px; }
nav a { width: 108px; }
.n1 { width: 80px; }
.mycourses { margin-left: auto; width: 125px; height: 40px; border: 2px solid #1d6be8; border-radius: 6px; background: #fff; color: #3478ea; font: 16px Lato, sans-serif; display: flex; align-items: center; padding: 0 0 0 8px; gap: 4px; }
.mycourses svg { margin-top: -1px; }
.mycourses span { margin-top: -2px; }
.avatar { margin: 0 40px 0 20px; }
.crumbs { height: 71px; padding: 34px 0 0 65px; font-size: 14.5px; line-height: 18px; color: #222; display: flex; }
.crumbs i { font-style: normal; width: 23px; text-align: center; }
.here { color: #a18af6; }
.card { width: 1232px; height: 530px; margin-left: 65px; background: #fff; border-radius: 4px; box-shadow: 0 0 3px rgba(0, 0, 0, .18); display: flex; }
aside { width: 300px; position: relative; box-shadow: 1px 0 4px rgba(0, 0, 0, .14); }
.ctitle { height: 61px; line-height: 63px; padding-left: 24px; font-size: 15.5px; color: #000; }
.scroller { display: flex; height: 470px; overflow: hidden; }
.list { width: 296px; background: #f7faff; }
.sbar { width: 4px; background: #68748c; border-radius: 2px 2px 0 0; }
.section { height: 64px; display: flex; align-items: center; justify-content: space-between; padding: 0 21px 0 16px; color: #5c6983; font-size: 16px; }
.section span { margin-top: -2px; }
.lesson { height: 64px; display: flex; align-items: center; padding: 3px 26px 0 26px; }
.lesson.current { background: #e5e9ee; }
.lesson > svg { margin-top: 1px; }
.ltext { flex: 1; margin-left: 6px; font-size: 14.5px; line-height: 20px; color: #5a5d62; margin-top: -2px; }
.ltext > div { height: 20px; }
.lesson > svg:last-child { margin-left: auto; }
.qm { font-size: 10px; transform: scaleX(-1); vertical-align: 2px; line-height: 10px; }
.collapse { position: absolute; left: 299px; top: 24px; width: 24px; height: 32px; background: #6b7bf8; border-radius: 0 4px 4px 0; box-shadow: 2px 2px 5px rgba(0, 0, 0, .25); display: flex; align-items: center; justify-content: center; }
main { padding-left: 40px; }
h1 { margin: 0; height: 68px; line-height: 72px; font-size: 24px; font-weight: 400; color: #222; }
.video { width: 852px; height: 460px; font-family: "Open Sans", "Noto Sans", sans-serif; background: #f0f0f1; }
.letterbox { height: 13px; background: #000; }
.ppthead { height: 43px; background: radial-gradient(60px 20px at 560px 12px, #ad4725, transparent), radial-gradient(180px 28px at 660px 15px, #b04826, transparent), linear-gradient(90deg, #c5502a 70%, #be4c28); color: #fff; font-size: 8px; }
.ptitle { height: 21px; display: flex; line-height: 21px; }
.ptitle .doc { margin-left: 237px; }
.ptitle .owner { margin-left: auto; margin-right: 9px; }
.ptabs { height: 22px; padding-top: 1px; display: flex; line-height: 22px; align-items: center; }
.ptabs > div { height: 21px; line-height: 20px; overflow: visible; flex: none; white-space: nowrap; }
.ptabs .on { background: #f3f0ef; color: #cb5632; }
.bulb { margin-left: 4px; }
.tell { color: #f8d5c8; margin-left: 2px; }
.person { margin-left: auto; }
.share { margin: 0 12px 0 5px; }
.ptabs > svg:last-child { margin-right: 9px; }
.ribbon { height: 58px; padding-top: 1px; display: flex; border-bottom: 1px solid #d9d9d9; background: #f3f2f3; }
.ribbon text { fill: #707070; }
.ribbon .on { fill: #4b4b4b; }
.ribbon .off { fill: #a5a5a5; }
.ribbon .blue { fill: #3275b8; }
.ribbon .glyphs text { fill: #999; font-size: 9px; }
.ribbon .glyphs .g6 { font-size: 6px; }
.ribbon .glyphs .g7 { font-size: 7px; }
.ribbon .glyphs .g8 { font-size: 8px; }
.ribbon .glyphs .g10 { font-size: 10px; }
.arr { fill: #777; }
.sep { stroke: #dcdcdc; }
.launch { fill: none; stroke: #bbb; stroke-width: .7; }
.classbar { height: 20px; border-bottom: 1px solid #dcdcdc; display: flex; align-items: center; padding-left: 6px; font-size: 8.500px; color: #555; background: #f0f0f1; }
.classbar span { margin-left: 6px; }
.classbar i { width: 7px; height: 7px; background: #286109; margin: 0 4px 0 6px; }
.classbar b { color: #333; margin-right: 7px; }
.cx { margin-left: auto; margin-right: 5px; }
.work { height: 317px; display: flex; background: #e6e5e8; }
.thumbs { width: 116px; overflow: hidden; padding-top: 12px; }
.trow { height: 73.300px; display: flex; }
.num { width: 17px; padding-left: 7px; margin-right: 4.5px; font-size: 10.5px; line-height: 10px; color: #737373; }
.num svg { margin-top: 1px; margin-left: -2px; }
.sel .num { color: #d05a35; }
.tbar { width: 14px; border-right: 1px solid #cfcfd2; padding: 1px 2px 0 0; display: flex; flex-direction: column; background: #dddce0; }
.up, .down { height: 11px; background: #fff; display: flex; align-items: center; justify-content: center; border: .5px solid #ddd; flex: none; }
.up::after { content: ""; border: 2px solid transparent; border-top: 0; border-bottom: 3px solid #666; }
.down::after { content: ""; border: 2px solid transparent; border-bottom: 0; border-top: 3px solid #666; }
.knob { height: 73px; margin-top: 1px; background: #fff; }
.gap { flex: 1; }
.stage { flex: 1; }
.canvasrow { height: 282px; padding-top: 1px; display: flex; justify-content: space-between; border-bottom: 1px solid #cdcdcf; }
.slide { position: relative; width: 363px; height: 278px; margin-left: 174px; background: #f6f4f7; color: #2e3a75; display: flex; flex-direction: column; }
h2 { margin: 0; font: 300 21.5px/36px Lato, sans-serif; height: 48px; padding-left: 99px; -webkit-text-stroke: .2px #2e3a75; }
ul { margin: 0; padding: 0 0 0 17px; list-style: none; font: 9.500px/12.150px "Open Sans", sans-serif; color: #3a457c; }
li::before { content: "•"; display: inline-block; width: 11px; }
li { height: 12.150px; white-space: nowrap; }
.ibeam { position: absolute; left: 62px; top: 149px; }
.sfoot { margin-top: auto; height: 43.5px; display: flex; padding-left: 7px; }
.by { width: 241px; display: flex; flex-direction: column; align-items: flex-start; flex: none; font-size: 7.500px; line-height: 10px; color: #4a4a4a; }
.by:last-child { width: 111px; }
.by strong { font: 14px/17px "Liberation Serif", serif; color: #b33b41; margin-top: 2px; -webkit-text-stroke: .2px #b33b41; }
.by em { font-style: normal; font-size: 8px; line-height: 9px; color: #333; }
.notes { padding-left: 6px; line-height: 21px; font-size: 9px; color: #666; }
.status { height: 3px; border-top: 1px solid #d3d3d5; padding-left: 647px; }
.status i { display: block; width: 20px; height: 2px; background: #c4c4c6; }
.pagebar { position: absolute; right: 0; top: 0; width: 4px; height: 429px; background: #68748c; border-radius: 2px; }
</style>
